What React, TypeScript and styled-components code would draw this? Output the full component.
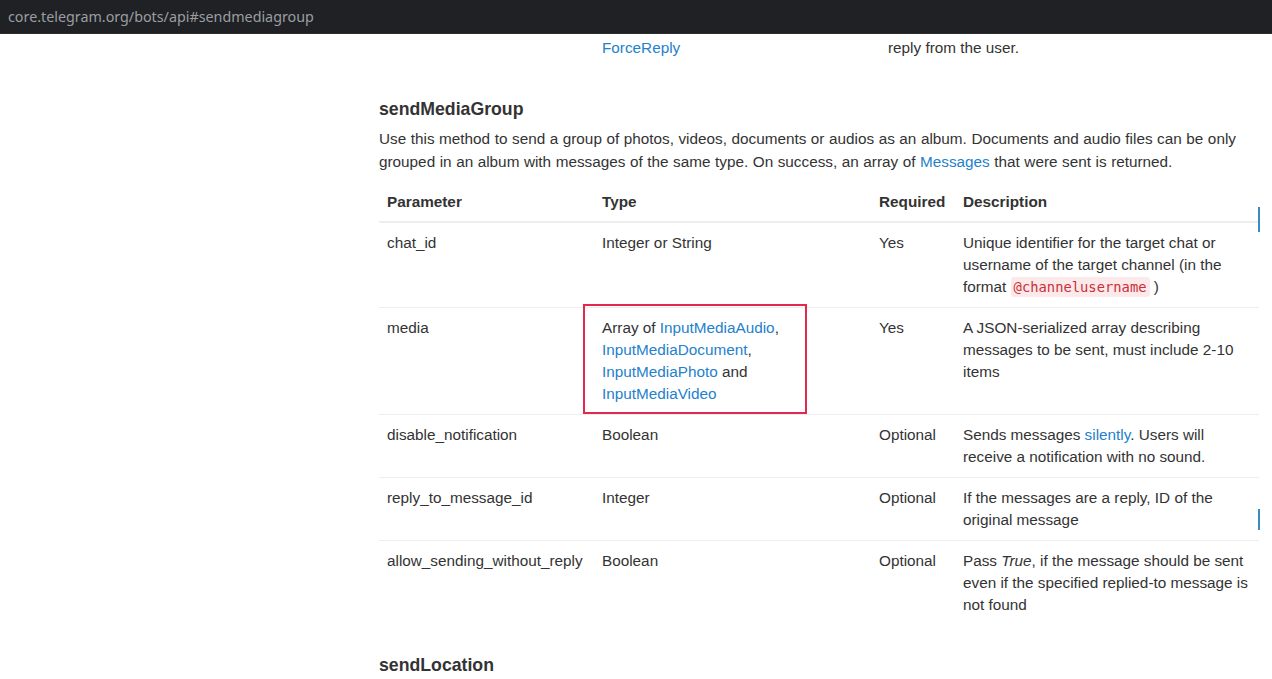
import React from "react";
import styled, { createGlobalStyle } from "styled-components";

const GlobalStyle = createGlobalStyle`
  html, body { margin: 0; padding: 0; background: #ffffff; }
  body { font-family: "Liberation Sans", Arial, sans-serif; color: #333333; }
  * { box-sizing: border-box; }
`;

const Page = styled.div`
  position: relative;
  width: 1272px;
  height: 679px;
  overflow: hidden;
  background: #ffffff;
`;

const AddressBar = styled.div`
  height: 34px;
  background: #1f2124;
  border-bottom: 1px solid #2b2c2f;
  display: flex;
  align-items: center;
  padding-left: 8px;
  font-family: "Noto Sans", "Open Sans", sans-serif;
  font-size: 14.3px;
  color: #9a9ea3;
`;

const Layout = styled.div`
  display: grid;
  grid-template-columns: 379px 880px;
`;

const Sidebar = styled.div``;

const Content = styled.div`
  font-size: 15.3px;
  line-height: 22px;
`;

const Table = styled.table`
  width: 880px;
  border-collapse: collapse;
  table-layout: fixed;
  margin: 0;
`;

const Th = styled.th`
  text-align: left;
  font-weight: bold;
  padding: 9px 8px 8px;
  border-bottom: 2px solid #eeeeee;
  vertical-align: top;
`;

const Td = styled.td<{ $first?: boolean }>`
  padding: 9px 8px;
  vertical-align: top;
  border-top: ${(p) => (p.$first ? "none" : "1px solid #eeeeee")};
`;

const TailCell = styled.td`
  padding: 3px 8px 9px;
  vertical-align: top;
`;

const Heading = styled.h4`
  margin: 0;
  font-size: 17.7px;
  line-height: 20px;
  font-weight: bold;
  color: #333333;
`;

const Intro = styled.p`
  margin: 8px 0 9px;
  line-height: 23px;
  word-spacing: 0.3px;
`;

const Link = styled.a`
  color: #2481cc;
  text-decoration: none;
`;

const Code = styled.code`
  font-family: "DejaVu Sans Mono", "Liberation Mono", monospace;
  font-size: 13.8px;
  color: #cc2f3a;
  background: #fce9e9;
  padding: 2px 3px;
  border-radius: 3px;
`;

const Section = styled.section<{ $top: number }>`
  margin-top: ${(p) => p.$top}px;
`;

const Highlight = styled.div`
  position: absolute;
  left: 583px;
  top: 304px;
  width: 224px;
  height: 110px;
  border: 2px solid #e3284f;
  pointer-events: none;
`;

const ScrollMark = styled.div<{ $top: number; $h: number }>`
  position: absolute;
  left: 1258px;
  top: ${(p) => p.$top}px;
  width: 2px;
  height: ${(p) => p.$h}px;
  background: #3a8ac4;
`;

type Row = { name: string; type: React.ReactNode; req: string; desc: React.ReactNode };

const rows: Row[] = [
  {
    name: "chat_id",
    type: "Integer or String",
    req: "Yes",
    desc: (
      <>
        Unique identifier for the target chat or username of the target channel (in the format{" "}
        <Code>@channelusername</Code> )
      </>
    ),
  },
  {
    name: "media",
    type: (
      <>
        Array of <Link href="#">InputMediaAudio</Link>, <Link href="#">InputMediaDocument</Link>,{" "}
        <Link href="#">InputMediaPhoto</Link> and <Link href="#">InputMediaVideo</Link>
      </>
    ),
    req: "Yes",
    desc: "A JSON-serialized array describing messages to be sent, must include 2-10 items",
  },
  {
    name: "disable_notification",
    type: "Boolean",
    req: "Optional",
    desc: (
      <>
        Sends messages <Link href="#">silently</Link>. Users will receive a notification with no sound.
      </>
    ),
  },
  {
    name: "reply_to_message_id",
    type: "Integer",
    req: "Optional",
    desc: "If the messages are a reply, ID of the original message",
  },
  {
    name: "allow_sending_without_reply",
    type: "Boolean",
    req: "Optional",
    desc: (
      <>
        Pass <em>True</em>, if the message should be sent even if the specified replied-to message is not found
      </>
    ),
  },
];

export default function App() {
  return (
    <>
      <GlobalStyle />
      <Page>
        <AddressBar>core.telegram.org/bots/api#sendmediagroup</AddressBar>
        <Layout>
          <Sidebar />
          <Content>
            <Table>
              <colgroup>
                <col style={{ width: 215 }} />
                <col style={{ width: 286 }} />
                <col style={{ width: 379 }} />
              </colgroup>
              <tbody>
                <tr>
                  <TailCell />
                  <TailCell>
                    <Link href="#">ForceReply</Link>
                  </TailCell>
                  <TailCell>reply from the user.</TailCell>
                </tr>
              </tbody>
            </Table>
            <Section $top={31}>
              <Heading>sendMediaGroup</Heading>
              <Intro>
                Use this method to send a group of photos, videos, documents or audios as an album. Documents
                and audio files can be only grouped in an album with messages of the same type. On success, an
                array of <Link href="#">Messages</Link> that were sent is returned.
              </Intro>
              <Table>
                <colgroup>
                  <col style={{ width: 215 }} />
                  <col style={{ width: 277 }} />
                  <col style={{ width: 84 }} />
                  <col style={{ width: 304 }} />
                </colgroup>
                <thead>
                  <tr>
                    <Th>Parameter</Th>
                    <Th>Type</Th>
                    <Th>Required</Th>
                    <Th>Description</Th>
                  </tr>
                </thead>
                <tbody>
                  {rows.map((r, i) => (
                    <tr key={r.name}>
                      <Td $first={i === 0}>{r.name}</Td>
                      <Td $first={i === 0}>{r.type}</Td>
                      <Td $first={i === 0}>{r.req}</Td>
                      <Td $first={i === 0}>{r.desc}</Td>
                    </tr>
                  ))}
                </tbody>
              </Table>
            </Section>
            <Section $top={30}>
              <Heading>sendLocation</Heading>
            </Section>
          </Content>
        </Layout>
        <Highlight />
        <ScrollMark $top={207} $h={25} />
        <ScrollMark $top={509} $h={21} />
      </Page>
    </>
  );
}
